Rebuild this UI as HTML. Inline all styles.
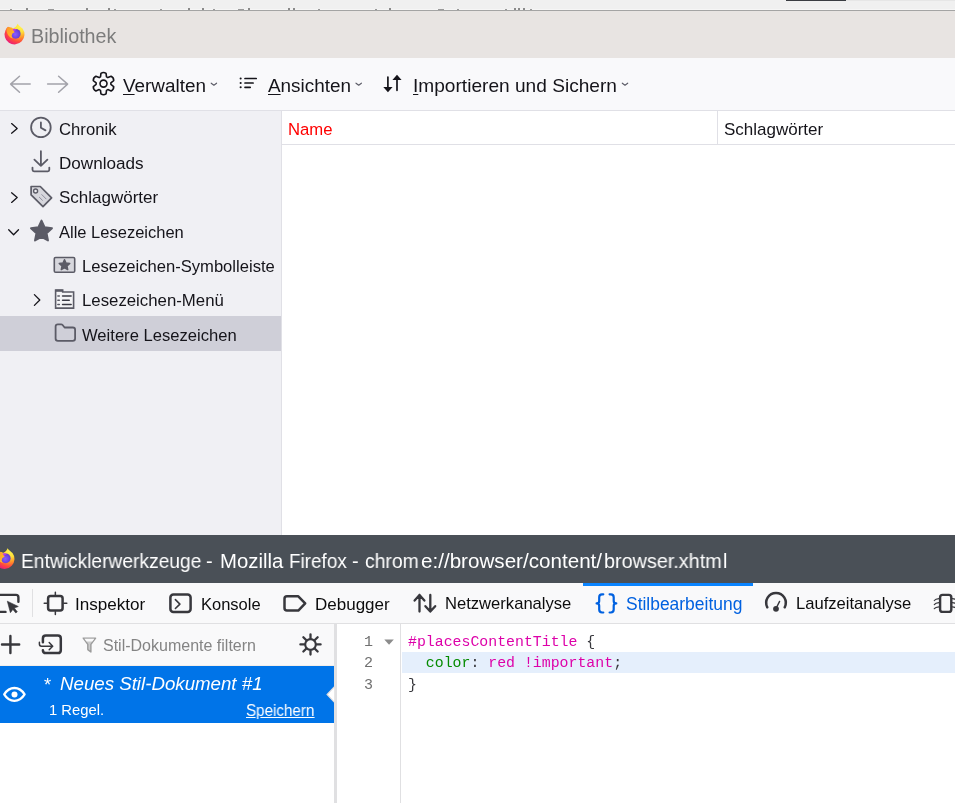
<!DOCTYPE html>
<html><head><meta charset="utf-8">
<style>
*{box-sizing:border-box;margin:0;padding:0}
html,body{width:955px;height:803px;overflow:hidden;background:#fff;font-family:"Liberation Sans",sans-serif;color:#15141a}
.a{position:absolute}
.t{position:absolute;white-space:pre;line-height:1;will-change:transform}
svg{position:absolute;overflow:visible}
</style></head><body>
<!-- top strip -->
<div class="a" style="left:0;top:0;width:955px;height:9px;background:#f0f0f0"></div>
<div class="a" style="left:0;top:9px;width:955px;height:1px;background:#f6f6f6"></div>
<div class="a" style="left:0;top:10px;width:955px;height:1px;background:#a4a4a4"></div>
<div class="a" style="left:786px;top:0;width:60px;height:1px;background:#3a3d42"></div>
<div class="a" style="left:846px;top:0;width:109px;height:1px;background:#e6e6e6"></div>
<div class="a" style="left:10px;top:9px;width:2px;height:1px;background:#999"></div>
<div class="a" style="left:26px;top:8px;width:2px;height:2px;background:#8a8a8a"></div>
<div class="a" style="left:48px;top:9px;width:6px;height:1px;background:#9a9a9a"></div>
<div class="a" style="left:86px;top:8px;width:2px;height:2px;background:#8a8a8a"></div>
<div class="a" style="left:108px;top:8px;width:2px;height:2px;background:#8a8a8a"></div>
<div class="a" style="left:114px;top:9px;width:2px;height:1px;background:#999"></div>
<div class="a" style="left:160px;top:9px;width:2px;height:1px;background:#999"></div>
<div class="a" style="left:188px;top:8px;width:2px;height:2px;background:#8a8a8a"></div>
<div class="a" style="left:202px;top:8px;width:2px;height:2px;background:#8a8a8a"></div>
<div class="a" style="left:213px;top:9px;width:2px;height:1px;background:#999"></div>
<div class="a" style="left:238px;top:9px;width:6px;height:1px;background:#9a9a9a"></div>
<div class="a" style="left:248px;top:8px;width:2px;height:2px;background:#8a8a8a"></div>
<div class="a" style="left:288px;top:8px;width:2px;height:2px;background:#8a8a8a"></div>
<div class="a" style="left:293px;top:8px;width:2px;height:2px;background:#8a8a8a"></div>
<div class="a" style="left:318px;top:9px;width:2px;height:1px;background:#999"></div>
<div class="a" style="left:375px;top:9px;width:2px;height:1px;background:#999"></div>
<div class="a" style="left:389px;top:8px;width:2px;height:2px;background:#8a8a8a"></div>
<div class="a" style="left:438px;top:9px;width:6px;height:1px;background:#9a9a9a"></div>
<div class="a" style="left:457px;top:9px;width:2px;height:1px;background:#999"></div>
<div class="a" style="left:505px;top:9px;width:2px;height:1px;background:#999"></div>
<div class="a" style="left:514px;top:8px;width:2px;height:2px;background:#8a8a8a"></div>
<div class="a" style="left:518px;top:8px;width:2px;height:2px;background:#8a8a8a"></div>
<div class="a" style="left:523px;top:8px;width:2px;height:2px;background:#8a8a8a"></div>
<div class="a" style="left:530px;top:9px;width:2px;height:1px;background:#999"></div>
<!-- title bar -->
<div class="a" style="left:0;top:11px;width:955px;height:47px;background:#e8e4e2"></div>
<div class="t" id="bib" style="left:31px;top:27px;font-size:19.7px;color:#7c7c7c">Bibliothek</div>
<!-- toolbar -->
<div class="a" style="left:0;top:58px;width:955px;height:52px;background:#f9f9fb"></div>
<div class="a" style="left:0;top:110px;width:955px;height:1px;background:#e0e0e6"></div>
<div class="t" style="left:123px;top:77px;font-size:18.9px"><u style="text-underline-offset:2px">V</u>erwalten</div>
<div class="t" style="left:268px;top:77px;font-size:18.9px"><u style="text-underline-offset:2px">A</u>nsichten</div>
<div class="t" style="left:413px;top:76px;font-size:19.05px;transform:scaleX(1.004);transform-origin:0 0"><u style="text-underline-offset:2px">I</u>mportieren und Sichern</div>
<!-- sidebar -->
<div class="a" style="left:0;top:111px;width:281px;height:424px;background:#f0f0f4"></div>
<div class="a" style="left:281px;top:111px;width:1px;height:424px;background:#e0e0e6"></div>
<div class="a" style="left:0;top:316px;width:281px;height:35px;background:#cfcfd8"></div>
<div class="t" style="left:59px;top:122px;font-size:16.7px">Chronik</div>
<div class="t" style="left:59px;top:155px;font-size:17.1px">Downloads</div>
<div class="t" style="left:59px;top:189px;font-size:17px">Schlagwörter</div>
<div class="t" style="left:59px;top:224px;font-size:16.5px">Alle Lesezeichen</div>
<div class="t" style="left:82px;top:259px;font-size:16.6px">Lesezeichen-Symbolleiste</div>
<div class="t" style="left:82px;top:293px;font-size:16.8px">Lesezeichen-Menü</div>
<div class="t" style="left:82px;top:328px;font-size:16.6px">Weitere Lesezeichen</div>
<!-- content header -->
<div class="a" style="left:282px;top:144px;width:673px;height:1px;background:#e0e0e6"></div>
<div class="a" style="left:717px;top:111px;width:1px;height:33px;background:#e0e0e6"></div>
<div class="t" style="left:288px;top:122px;font-size:16.7px;color:#f00">Name</div>
<div class="t" style="left:724px;top:121px;font-size:17px">Schlagwörter</div>

<!-- devtools title -->
<div class="a" style="left:0;top:535px;width:955px;height:48px;background:#4a5057"></div>
<div class="t" style="left:20.5px;top:552px;font-size:19.95px;color:#fff;transform:scaleX(0.963);transform-origin:0 0">Entwicklerwerkzeuge</div>
<div class="t" style="left:205.5px;top:552px;font-size:19.95px;color:#fff;transform:scaleX(1.000);transform-origin:0 0">-</div>
<div class="t" style="left:219.5px;top:552px;font-size:19.95px;color:#fff;transform:scaleX(1.020);transform-origin:0 0">Mozilla</div>
<div class="t" style="left:289.4px;top:552px;font-size:19.95px;color:#fff;transform:scaleX(0.947);transform-origin:0 0">Firefox</div>
<div class="t" style="left:351.7px;top:552px;font-size:19.95px;color:#fff;transform:scaleX(1.000);transform-origin:0 0">-</div>
<div class="t" style="left:364.8px;top:552px;font-size:19.95px;color:#fff;transform:scaleX(0.971);transform-origin:0 0">chrom</div>
<div class="t" style="left:420.8px;top:552px;font-size:19.95px;color:#fff;transform:scaleX(1.034);transform-origin:0 0">e://browser/content/</div>
<div class="t" style="left:604.0px;top:552px;font-size:19.95px;color:#fff;transform:scaleX(0.993);transform-origin:0 0">browser.xhtm</div>
<div class="t" style="left:723.4px;top:552px;font-size:19.95px;color:#fff;transform:scaleX(1.000);transform-origin:0 0">l</div>
<!-- tabs -->
<div class="a" style="left:0;top:583px;width:955px;height:40px;background:#f9f9fa"></div>
<div class="a" style="left:0;top:623px;width:955px;height:1px;background:#e0e0e2"></div>
<div class="a" style="left:583px;top:583px;width:170px;height:3px;background:#0a84ff"></div>
<div class="a" style="left:32px;top:589px;width:1px;height:28px;background:#e0e0e2"></div>
<div class="t" style="left:75px;top:596px;font-size:17.1px;color:#0c0c0d">Inspektor</div>
<div class="t" style="left:201px;top:596px;font-size:16.5px;color:#0c0c0d">Konsole</div>
<div class="t" style="left:315px;top:596px;font-size:17px;color:#0c0c0d">Debugger</div>
<div class="t" style="left:445px;top:596px;font-size:16.6px;color:#0c0c0d">Netzwerkanalyse</div>
<div class="t" style="left:626px;top:596px;font-size:17.45px;color:#0061e0">Stilbearbeitung</div>
<div class="t" style="left:796px;top:596px;font-size:16.6px;color:#0c0c0d">Laufzeitanalyse</div>

<!-- style editor sidebar -->
<div class="a" style="left:0;top:624px;width:334px;height:179px;background:#fff"></div>
<div class="a" style="left:0;top:624px;width:334px;height:41px;background:#f9f9fa"></div>
<div class="a" style="left:0;top:665px;width:334px;height:1px;background:#f3eee9"></div>
<div class="a" style="left:0;top:666px;width:334px;height:57px;background:#0074e8"></div>
<div class="a" style="left:334px;top:624px;width:3px;height:179px;background:#e0e0e2"></div>
<div class="t" style="left:103px;top:638px;font-size:16px;color:#848484">Stil-Dokumente filtern</div>
<div class="t" style="left:44px;top:676px;font-size:18.4px;color:#fff">*</div>
<div class="t" style="left:60px;top:675px;font-size:18.7px;color:#fff;font-style:italic">Neues Stil-Dokument #1</div>
<div class="t" style="left:49px;top:703px;font-size:14.8px;color:#fff">1 Regel.</div>
<div class="t" style="left:246px;top:703px;font-size:15.9px;color:#fff;text-decoration:underline;text-underline-offset:1px;transform:scaleX(0.955);transform-origin:0 0">Speichern</div>

<!-- editor -->
<div class="a" style="left:400px;top:624px;width:1px;height:179px;background:#e0e0e2"></div>
<div class="a" style="left:402px;top:652px;width:553px;height:21px;background:#e5effc"></div>
<div class="t" style="left:364px;top:635px;font-size:15px;font-family:'Liberation Mono',monospace;color:#707070">1</div>
<div class="t" style="left:364px;top:656px;font-size:15px;font-family:'Liberation Mono',monospace;color:#707070">2</div>
<div class="t" style="left:364px;top:678px;font-size:15px;font-family:'Liberation Mono',monospace;color:#707070">3</div>
<div class="t" style="left:408px;top:635px;font-size:14.87px;font-family:'Liberation Mono',monospace;color:#dd00a9"><span>#placesContentTitle</span><span style="color:#38383d"> {</span></div>
<div class="t" style="left:408px;top:656px;font-size:14.87px;font-family:'Liberation Mono',monospace;color:#38383d">  <span style="color:#058b00">color</span>: <span style="color:#dd00a9">red !important</span>;</div>
<div class="t" style="left:408px;top:678px;font-size:14.87px;font-family:'Liberation Mono',monospace;color:#38383d">}</div>

<svg class="a" style="left:0;top:0" width="955" height="803" viewBox="0 0 955 803">
<defs>
<radialGradient id="ffb" cx="0.78" cy="0.12" r="1.05">
<stop offset="0" stop-color="#fff44f"/><stop offset="0.28" stop-color="#ffe03a"/><stop offset="0.5" stop-color="#ff9a28"/><stop offset="0.72" stop-color="#ff4a3e"/><stop offset="0.95" stop-color="#e8157f"/>
</radialGradient>
<radialGradient id="ffp" cx="0.45" cy="0.55" r="0.65">
<stop offset="0" stop-color="#8a5cff"/><stop offset="0.6" stop-color="#6e44e0"/><stop offset="1" stop-color="#5a35b8"/>
</radialGradient>
<linearGradient id="ffh" x1="0" y1="0" x2="1" y2="1">
<stop offset="0" stop-color="#ff9424"/><stop offset="1" stop-color="#ffc22c"/>
</linearGradient>
<g id="fflogo">
<path d="M3 2.7 C4.2 3.3 5.4 3.6 6.6 3.5 C7.4 4.3 8.2 4.5 9 4.1 C10.6 3 12 1.5 12.6 -0.3 C13.8 1.8 16 2.9 17.5 4.5 A9.95 9.95 0 1 1 0.5 6.3 C1 4.9 1.9 3.6 3 2.7Z" fill="url(#ffb)"/>
<circle cx="10.7" cy="9.8" r="4.9" fill="url(#ffp)"/>
<path d="M7.2 5.2 C8.6 4.5 10.4 4.5 11.8 5.6 L8.8 7.6Z" fill="#c13ae0"/>
<path d="M1.5 5.2 C2.2 4.2 2.6 3.6 3 3.1 C4.4 3.8 5.8 4.2 7 4.4 L9.7 8.3 L7.4 9.4 L6.6 12 L7.8 14.4 C4.6 13.6 1.6 10.5 1.5 5.2Z" fill="url(#ffh)"/>
</g>
</defs>
<use href="#fflogo" x="5" y="24"/>
<use href="#fflogo" x="-5" y="548.5"/>
<g fill="none" stroke-linecap="round" stroke-linejoin="round">
<!-- back / forward -->
<path d="M19.5 76.2 L10.6 84.1 L19.5 92.2 M10.6 84.1 H30.2" stroke="#a3a3aa" stroke-width="1.5"/>
<path d="M58.6 76.2 L67.6 84.1 L58.6 92.2 M67.6 84.1 H47.6" stroke="#a3a3aa" stroke-width="1.5"/>
<!-- gear -->
<path d="M100.49 76.84 L100.94 73.31 Q103.50 71.60 106.06 73.31 L106.51 76.84 L107.85 77.61 L111.13 76.24 Q113.89 77.60 113.69 80.68 L110.86 82.83 L110.86 84.37 L113.69 86.52 Q113.89 89.60 111.13 90.96 L107.85 89.59 L106.51 90.36 L106.06 93.89 Q103.50 95.60 100.94 93.89 L100.49 90.36 L99.15 89.59 L95.87 90.96 Q93.11 89.60 93.31 86.52 L96.14 84.37 L96.14 82.83 L93.31 80.68 Q93.11 77.60 95.87 76.24 L99.15 77.61 Z" stroke="#15141a" stroke-width="1.6"/>
<circle cx="103.5" cy="83.6" r="3.5" stroke="#15141a" stroke-width="1.6"/>
<!-- list -->
<path d="M240.6 78.5 h0.1 M240.6 83 h0.1 M240.6 87.3 h0.1" stroke="#15141a" stroke-width="2"/>
<path d="M245 78.5 H256.2 M245 83 H253.1 M245 87.3 H250.2" stroke="#15141a" stroke-width="1.7"/>
<!-- import arrows -->
<path d="M387.9 77 V88 M397 80 V90.3" stroke="#15141a" stroke-width="1.7"/>
<!-- dropdown chevrons -->
<path d="M211.2 83.2 L213.9 85.3 L216.6 83.2" stroke="#5b5b66" stroke-width="1.1"/>
<path d="M356 83.2 L358.7 85.3 L361.4 83.2" stroke="#5b5b66" stroke-width="1.1"/>
<path d="M622.3 83.2 L625 85.3 L627.7 83.2" stroke="#5b5b66" stroke-width="1.1"/>
<!-- sidebar chevrons -->
<path d="M11.6 123.6 L17.2 128.4 L11.6 133.2" stroke="#15141a" stroke-width="1.3"/>
<path d="M11.6 192.8 L17.2 197.6 L11.6 202.4" stroke="#15141a" stroke-width="1.3"/>
<path d="M8.7 229.8 L13.6 234.8 L18.5 229.8" stroke="#15141a" stroke-width="1.3"/>
<path d="M34.4 294.6 L39.8 300 L34.4 305.4" stroke="#15141a" stroke-width="1.3"/>
<!-- clock -->
<circle cx="40.9" cy="127.4" r="9.8" stroke="#5b5b66" stroke-width="1.8"/>
<path d="M40.9 122.4 V127.7 L45.5 130.4" stroke="#5b5b66" stroke-width="1.8"/>
<!-- download -->
<path d="M40.9 151.2 V165.8 M34.4 159.6 L40.9 165.9 L47.4 159.6" stroke="#5b5b66" stroke-width="1.8"/>
<path d="M32.5 167.6 V169.8 Q32.5 171.3 34 171.3 H47.8 Q49.3 171.3 49.3 169.8 V167.6" stroke="#5b5b66" stroke-width="1.8"/>
<!-- tag -->
<path d="M31.1 186.5 H40.3 L51.6 197.9 L43 206.6 L31.1 194.9 Z" fill="#d7d7dd" stroke="#5b5b66" stroke-width="1.7"/>
<circle cx="35.6" cy="191" r="2" fill="#f0f0f4" stroke="#5b5b66" stroke-width="1.4"/>
<path d="M39.3 197.2 L42.4 200.3 M41.8 194.6 L46.1 198.9" stroke="#8f8f9d" stroke-width="1"/>
<!-- star -->
<path d="M41.50 220.60 L44.62 227.31 L51.96 228.20 L46.54 233.24 L47.97 240.50 L41.50 236.90 L35.03 240.50 L36.46 233.24 L31.04 228.20 L38.38 227.31Z" fill="#5b5b66" stroke="#5b5b66" stroke-width="2"/>
<!-- toolbar bookmark -->
<rect x="54.3" y="257.5" width="20.4" height="14.7" rx="1.3" fill="#d7d7dd" stroke="#5b5b66" stroke-width="1.6"/>
<path d="M64.50 259.60 L66.09 263.02 L69.83 263.47 L67.07 266.03 L67.79 269.73 L64.50 267.90 L61.21 269.73 L61.93 266.03 L59.17 263.47 L62.91 263.02Z" fill="#5b5b66" stroke="#5b5b66" stroke-width="1.3"/>
<!-- menu -->
<path d="M55.6 308.1 V290.1 H62.7 V292 H73.6 V308.1 Z" fill="#f4f4f6" stroke="#5b5b66" stroke-width="1.6" stroke-linejoin="miter"/>
<path d="M55.6 290.7 H62.7" stroke="#5b5b66" stroke-width="2.2" stroke-linecap="butt"/>
<path d="M57.9 296 H59.3 M57.9 300.25 H59.3 M57.9 304.5 H59.3" stroke="#5b5b66" stroke-width="1.6"/>
<path d="M62.6 296 H71.1 M62.6 300.25 H69.2 M62.6 304.5 H71.1" stroke="#3a3a44" stroke-width="1.6"/>
<!-- folder -->
<path d="M55.6 326.6 Q55.6 324.3 57.9 324.3 H61.2 Q62 324.3 62.6 325 L64.6 327.5 H72.8 Q75.1 327.5 75.1 329.8 V338.5 Q75.1 340.8 72.8 340.8 H57.9 Q55.6 340.8 55.6 338.5 Z" stroke="#5b5b66" stroke-width="1.8"/>
</g>
<!-- import arrow heads -->
<path d="M383.3 87 H392.6 L387.95 92.2Z M392.4 79.9 H401.6 L397 74.8Z" fill="#15141a"/>

<g fill="none" stroke-linecap="round" stroke-linejoin="round" stroke="#38383d">
<!-- picker -->
<path d="M-2 594.9 H16 Q18.4 594.9 18.4 597.3 V601.8 M-2 611.9 H5.5" stroke-width="2.4"/>
<!-- inspector -->
<rect x="48.1" y="596.1" width="14.5" height="14.5" rx="2.5" stroke-width="2.5"/>
<path d="M55.35 592.2 V595 M55.35 611.7 V614.6 M44.2 603.35 H47 M63.8 603.35 H66.8" stroke-width="1.5"/>
<!-- console -->
<rect x="170.4" y="594.6" width="20.2" height="17.3" rx="3" stroke-width="2.5"/>
<path d="M175.4 599.6 L179.9 604.1 L175.4 608.5" stroke-width="1.6"/>
<!-- debugger -->
<path d="M287 596.3 H298.3 L305.2 603.4 L298.3 610.6 H287 Q284.5 610.6 284.5 608.1 V598.8 Q284.5 596.3 287 596.3Z" stroke-width="2.5"/>
<!-- network -->
<path d="M419.5 595 V611.6 M414.6 600.6 L419.5 595 L424.4 600.6 M430.3 595 V611.6 M425.4 606.2 L430.3 611.6 L435.2 606.2" stroke-width="2.3"/>
<!-- gauge -->
<path d="M767.3 607.3 A9.8 9.8 0 1 1 784.7 607.3" stroke-width="2.5"/>
<path d="M776 608.5 L779.6 601.4" stroke-width="1.4"/>
<!-- memory chip -->
<rect x="940.1" y="594.9" width="11.2" height="17" rx="2.5" stroke-width="2.4"/>
<path d="M934.3 600.5 Q935.5 599 939 598.6 M934.3 604.6 Q935.5 603.1 939 602.7 M934.3 608.7 Q935.5 607.2 939 606.8 M952.5 598.6 Q955 598.8 957 600.5 M952.5 602.7 Q955 602.9 957 604.6 M952.5 606.8 Q955 607 957 608.7" stroke-width="1.2"/>
<!-- plus -->
<path d="M10.4 636 V653 M2 644.5 H19.2" stroke-width="2.4"/>
<!-- import -->
<path d="M42.9 642.2 V638.4 Q42.9 635.5 45.8 635.5 H57.9 Q60.8 635.5 60.8 638.4 V650.2 Q60.8 653.1 57.9 653.1 H45.8 Q42.9 653.1 42.9 650.2 V650.4" stroke-width="2.5"/>
<path d="M39.4 642.2 V644.1 Q39.4 646.2 41.5 646.2 H52.6 M49.2 642.6 L52.7 646.2 L49.2 649.8" stroke-width="1.5"/>
<!-- settings -->
<circle cx="310.5" cy="644.4" r="5.3" stroke-width="2.1"/>
<path d="M310.50 650.20 L310.50 654.50 M306.40 648.50 L303.36 651.54 M304.70 644.40 L300.40 644.40 M306.40 640.30 L303.36 637.26 M310.50 638.60 L310.50 634.30 M314.60 640.30 L317.64 637.26 M316.30 644.40 L320.60 644.40 M314.60 648.50 L317.64 651.54" stroke-width="2.3"/>
</g>
<!-- gauge dot -->
<circle cx="776" cy="608.8" r="2.9" fill="#38383d"/>
<!-- picker cursor -->
<path d="M7.3 601.2 L18.3 606.5 L14.3 608 L17.3 611.8 L15.8 613 L12.9 609.4 L10.4 612.7 Z" fill="#38383d" stroke="#38383d" stroke-width="0.6" stroke-linejoin="round"/>
<!-- filter funnel -->
<path d="M83.2 638.1 H95.6 L90.9 644.3 V652 L87.8 649.6 V644.3 Z" fill="#cbcbcb" stroke="#9b9b9b" stroke-width="1.4" stroke-linejoin="round"/>
<path d="M84.4 638.8 H94.4 L92.2 641.6 H86.6 Z" fill="#f9f9fa"/>
<!-- style editor braces -->
<g fill="none" stroke="#0061e0" stroke-width="2.2" stroke-linecap="round" stroke-linejoin="round">
<path d="M603.3 594.3 H602 Q599.2 594.3 599.2 597.2 V601 Q599.2 603.4 596.6 603.4 Q599.2 603.4 599.2 605.8 V609.6 Q599.2 612.5 602 612.5 H603.3"/>
<path d="M609.6 594.3 H610.9 Q613.7 594.3 613.7 597.2 V601 Q613.7 603.4 616.3 603.4 Q613.7 603.4 613.7 605.8 V609.6 Q613.7 612.5 610.9 612.5 H609.6"/>
</g>
<!-- eye -->
<path d="M4.2 694.4 C7.2 689.6 11 688 14.4 688 C17.8 688 21.6 689.6 24.6 694.4 C21.6 699.2 17.8 700.8 14.4 700.8 C11 700.8 7.2 699.2 4.2 694.4Z" fill="none" stroke="#fff" stroke-width="2.3" stroke-linejoin="round"/>
<circle cx="14.5" cy="694.4" r="3" fill="#fff"/>
<!-- selection arrow -->
<path d="M334.2 686.8 L327 694.5 L334.2 702.2" fill="#fff" stroke="#d8d8dc" stroke-width="1.1"/>
<!-- fold triangle -->
<path d="M384.3 639.6 H393.8 L389.05 644.8Z" fill="#8c8c8c"/>
</svg>
</body></html>
